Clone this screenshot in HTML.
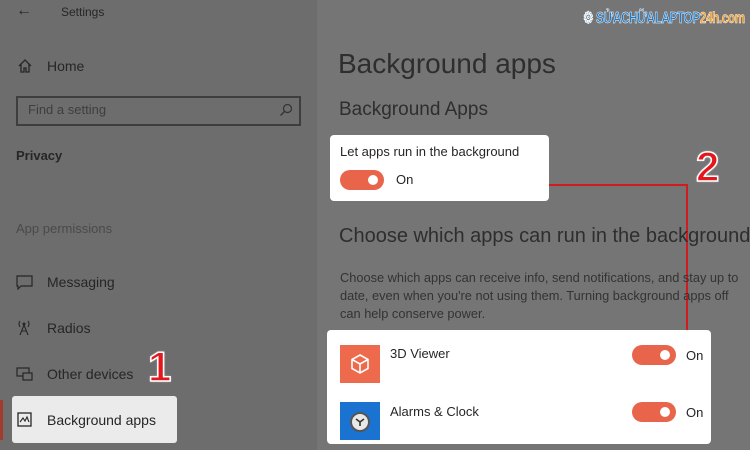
<!DOCTYPE html>
<html><head><meta charset="utf-8"><style>
*{margin:0;padding:0;box-sizing:border-box}
body{width:750px;height:450px;overflow:hidden;background:#757575;font-family:"Liberation Sans",sans-serif;color:#262626;position:relative}
.a{position:absolute;white-space:nowrap}
#left{position:absolute;left:0;top:0;width:317px;height:450px;background:#6d6d6d}
.tg{position:absolute;width:44px;height:20px;border-radius:10px;background:#e8654b}
.tg:after{content:"";position:absolute;right:6px;top:5px;width:10px;height:10px;border-radius:50%;background:#fff}
.red{color:#e3171c;font-weight:bold;font-size:42px;-webkit-text-stroke:1.5px #fff;text-shadow:0 0 2px #fff}
</style></head><body>
<div id="left"></div>
<div class="a" style="left:16px;top:2px;font-size:16px">&#8592;</div>
<div class="a" style="left:61px;top:5px;font-size:12px">Settings</div>
<svg class="a" style="left:17px;top:58px" width="16" height="16" viewBox="0 0 16 16"><path d="M2 8L8 2L14 8M4 6V14H7V10H9V14H12V6" fill="none" stroke="#262626" stroke-width="1.3"/></svg>
<div class="a" style="left:47px;top:58px;font-size:14px">Home</div>
<div class="a" style="left:16px;top:96px;width:285px;height:30px;border:2px solid #3e3e3e"></div>
<div class="a" style="left:28px;top:102px;font-size:13px;color:#3e3e3e">Find a setting</div>
<svg class="a" style="left:279px;top:103px" width="14" height="14"><circle cx="8.5" cy="5.5" r="4" fill="none" stroke="#333" stroke-width="1.2"/><path d="M5.5 8.5L1.5 12.5" stroke="#333" stroke-width="1.3"/></svg>
<div class="a" style="left:16px;top:148px;font-size:13px;font-weight:bold">Privacy</div>
<div class="a" style="left:16px;top:221px;font-size:13px;color:#4a4a4a">App permissions</div>
<svg class="a" style="left:16px;top:275px" width="17" height="15"><path d="M1 1H16V11H5L2 14V11H1Z" fill="none" stroke="#262626" stroke-width="1.2"/></svg>
<div class="a" style="left:47px;top:274px;font-size:14px">Messaging</div>
<svg class="a" style="left:17px;top:320px" width="14" height="16"><circle cx="7" cy="4" r="1.5" fill="#262626"/><path d="M3 1Q1 4 3 7M11 1Q13 4 11 7M7 5L3 15M7 5L11 15M4.5 11H9.5" fill="none" stroke="#262626" stroke-width="1.1"/></svg>
<div class="a" style="left:47px;top:320px;font-size:14px">Radios</div>
<svg class="a" style="left:16px;top:367px" width="17" height="14"><rect x="1" y="1" width="12" height="8" fill="none" stroke="#262626" stroke-width="1.2"/><rect x="7" y="6" width="9" height="7" fill="#6d6d6d" stroke="#262626" stroke-width="1.2"/></svg>
<div class="a" style="left:47px;top:366px;font-size:14px">Other devices</div>
<div class="a" style="left:0;top:400px;width:3px;height:40px;background:#a23a2e"></div>
<div class="a" style="left:12px;top:396px;width:165px;height:47px;background:#ebebeb;border-radius:3px"></div>
<svg class="a" style="left:17px;top:412px" width="15" height="15"><rect x="1" y="1" width="13" height="13" fill="none" stroke="#262626" stroke-width="1.3"/><path d="M3 10L6 6L8 9L10 5L12 10" fill="none" stroke="#262626" stroke-width="1.1"/></svg>
<div class="a" style="left:47px;top:412px;font-size:14px">Background apps</div>
<div class="a red" style="left:148px;top:343px">1</div>

<div class="a" style="left:583px;top:8px;font-size:16px;font-weight:bold;color:#1e7bc9;-webkit-text-stroke:.5px #fff;letter-spacing:-.6px;transform:scaleX(.74);transform-origin:0 0">&#9881; SỬACHỮALAPTOP<span style="color:#f39a1f">24h.com</span></div>

<div class="a" style="left:338px;top:48px;font-size:28px;color:#2e2e2e">Background apps</div>
<div class="a" style="left:339px;top:99px;font-size:19px;color:#2e2e2e">Background Apps</div>
<div class="a" style="left:330px;top:135px;width:219px;height:66px;background:#fff;border-radius:4px"></div>
<div class="a" style="left:340px;top:144px;font-size:13px">Let apps run in the background</div>
<div class="tg" style="left:340px;top:170px"></div>
<div class="a" style="left:396px;top:172px;font-size:13px">On</div>
<div class="a red" style="left:696px;top:143px">2</div>
<div class="a" style="left:549px;top:184px;width:139px;height:2px;background:#d01c1f"></div>
<div class="a" style="left:686px;top:184px;width:2px;height:156px;background:#d01c1f"></div>
<div class="a" style="left:339px;top:225px;font-size:20px;color:#2e2e2e">Choose which apps can run in the background</div>
<div class="a" style="left:340px;top:269px;font-size:12.8px;line-height:18px;color:#333">Choose which apps can receive info, send notifications, and stay up to<br>date, even when you're not using them. Turning background apps off<br>can help conserve power.</div>
<div class="a" style="left:327px;top:330px;width:384px;height:114px;background:#fff;border-radius:4px"></div>
<div class="a" style="left:340px;top:345px;width:40px;height:38px;background:#ee6a4c"></div>
<svg class="a" style="left:349px;top:353px" width="22" height="22"><path d="M11 2L19 6.5V15.5L11 20L3 15.5V6.5Z M3 6.5L11 11L19 6.5 M11 11V20" fill="none" stroke="#fff" stroke-width="1.6"/></svg>
<div class="a" style="left:390px;top:346px;font-size:13px">3D Viewer</div>
<div class="tg" style="left:632px;top:345px"></div>
<div class="a" style="left:686px;top:348px;font-size:13px">On</div>
<div class="a" style="left:340px;top:402px;width:40px;height:38px;background:#1a73d1"></div>
<svg class="a" style="left:349px;top:411px" width="22" height="22"><circle cx="11" cy="11" r="9" fill="#e8e8e8" stroke="#555" stroke-width="2"/><path d="M11 11L11 15M11 11L7 8M11 11L15 8" stroke="#333" stroke-width="1.6"/></svg>
<div class="a" style="left:390px;top:404px;font-size:13px">Alarms &amp; Clock</div>
<div class="tg" style="left:632px;top:402px"></div>
<div class="a" style="left:686px;top:405px;font-size:13px">On</div>
</body></html>
